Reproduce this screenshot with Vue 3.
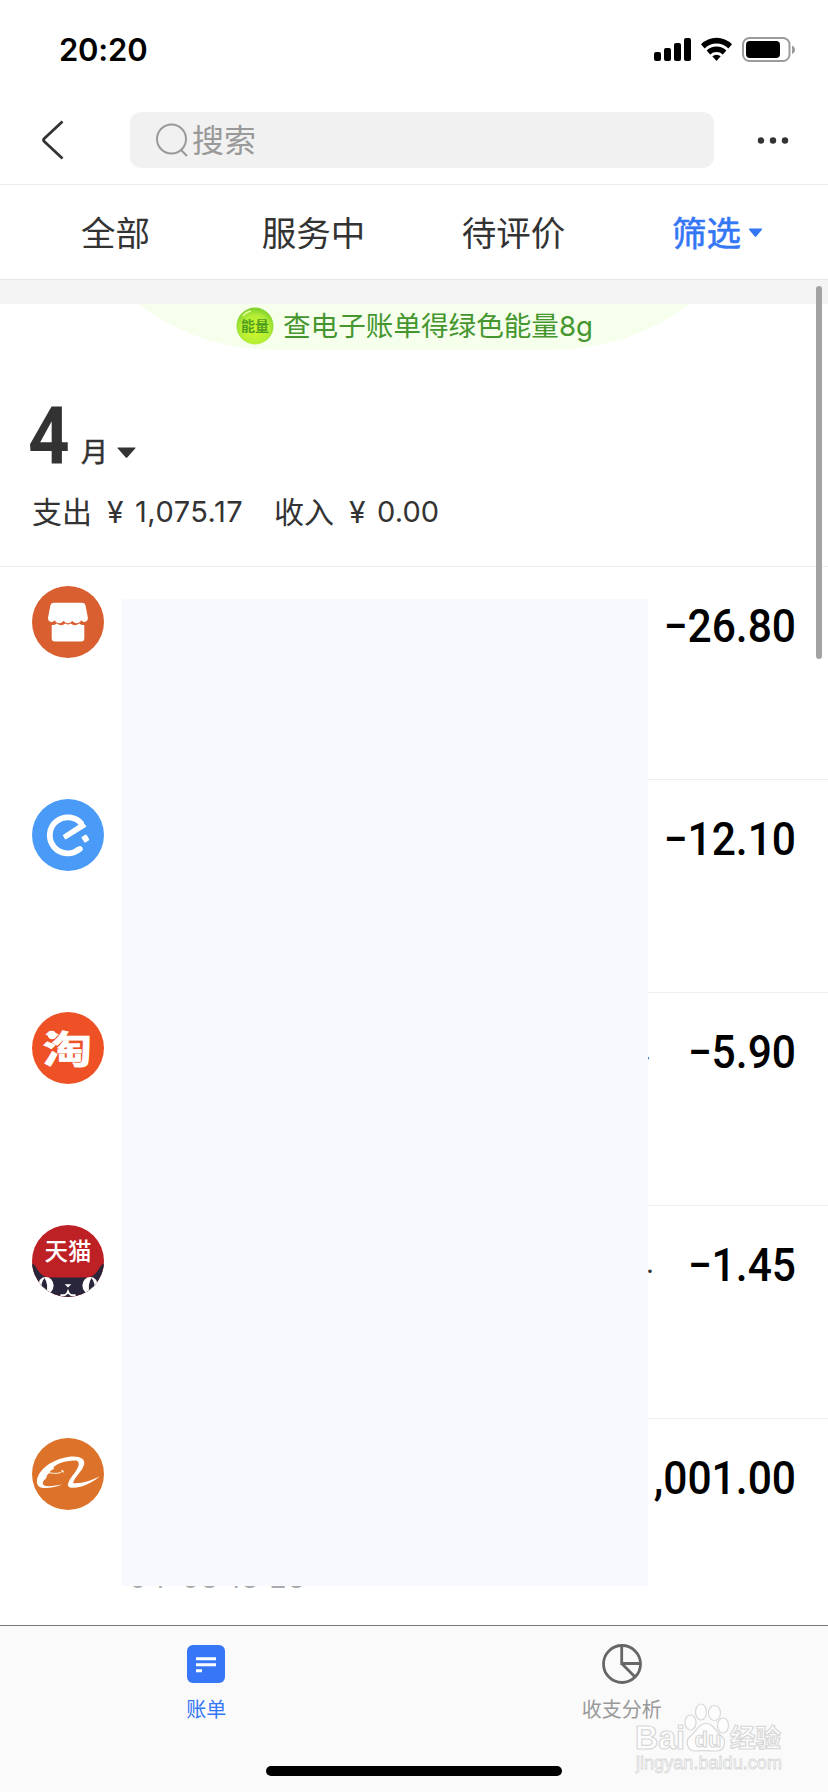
<script setup>
const tabs = ['全部', '服务中', '待评价']
const bills = [
  { icon: 'store', amount: '−26.80' },
  { icon: 'eleme', amount: '−12.10' },
  { icon: 'taobao', amount: '−5.90', rest: '.' },
  { icon: 'tmall', amount: '−1.45', rest: '.' },
  { icon: 'alibaba', amount: ',001.00' },
]
</script>

<template>
  <div class="screen">
    <header class="status">
      <span class="time">20:20</span>
      <svg class="indicators" width="144" height="28" viewBox="0 0 144 28">
        <rect x="1" y="17" width="7" height="9" rx="2" />
        <rect x="11" y="13" width="7" height="13" rx="2" />
        <rect x="21" y="8" width="7" height="18" rx="2" />
        <rect x="31" y="3" width="7" height="23" rx="2" />
        <path d="M48 9.2a22 22 0 0 1 31 0l-3.6 4.2a17 17 0 0 0-23.8 0z" />
        <path d="M53.6 15.4a14.4 14.4 0 0 1 19.8 0l-3.6 4.1a9.2 9.2 0 0 0-12.6 0z" />
        <path d="M59.3 21.3a6.3 6.3 0 0 1 8.4 0l-4.2 4.7z" />
        <rect x="90" y="3" width="46.500" height="23" rx="6.500" fill="none" stroke="#9b9b9b" stroke-width="2" />
        <rect x="93" y="6" width="34" height="17" rx="4" />
        <path d="M139 10.500q3 1.200 3 4.200t-3 4.200z" fill="#9b9b9b" />
      </svg>
    </header>

    <nav class="bar">
      <svg class="back" width="26" height="42" viewBox="0 0 26 42">
        <path d="M22.500 2.500 4.300 19.500q-1.500 1.500 0 3L22.500 39.500" fill="none" stroke="#333" stroke-width="2.800" />
      </svg>
      <div class="search">
        <svg width="36" height="36" viewBox="0 0 36 36" fill="none" stroke="#999" stroke-width="2">
          <circle cx="17.500" cy="17" r="14.500" />
          <path d="m27 28 6 6" />
        </svg>
        <span>搜索</span>
      </div>
      <svg class="more" width="32" height="8" viewBox="0 0 32 8" fill="#333">
        <circle cx="4" cy="4.500" r="3.200" /><circle cx="16" cy="4.500" r="3.200" /><circle cx="28" cy="4.500" r="3.200" />
      </svg>
    </nav>

    <div class="tabs">
      <span v-for="t in tabs" :key="t" class="tab">{{ t }}</span>
      <span class="filter">筛选<svg width="15" height="10" viewBox="0 0 15 10"><path d="M1.500.5h12q1.200.2.4 1.300L8.200 8.600q-.7.800-1.400 0L1.100 1.800Q.4.700 1.500.5z" fill="#3477f6" /></svg></span>
    </div>

    <div class="gap"></div>

    <section class="energy">
      <div class="pill">
        <svg width="38" height="38" viewBox="0 0 38 38">
          <defs>
            <radialGradient id="ball" cx=".5" cy=".6" r=".55">
              <stop offset="0" stop-color="#d0f72c" /><stop offset=".7" stop-color="#b5ee36" /><stop offset="1" stop-color="#86d52e" />
            </radialGradient>
          </defs>
          <circle cx="19" cy="19" r="18.500" fill="url(#ball)" />
          <path d="M7 9Q10 5 15 4" fill="none" stroke="#e4fb9a" stroke-width="1.500" />
          <text x="19" y="24" text-anchor="middle" class="ball-text">能量</text>
        </svg>
        <span>查电子账单得绿色能量8g</span>
      </div>
    </section>

    <section class="summary">
      <div class="month">
        <b>4</b><span>月</span>
        <svg width="19" height="12" viewBox="0 0 19 12"><path d="M1 .5h17q1 .2.200 1.100l-8 9q-.7.700-1.400 0l-8-9Q0 .7 1 .5z" fill="#333" /></svg>
      </div>
      <div class="totals">
        <span class="label">支出</span><span class="yen">¥</span><span class="sum out">1,075.17</span>
        <span class="label">收入</span><span class="yen">¥</span><span class="sum">0.00</span>
      </div>
    </section>

    <main class="list">
      <article v-for="(b, i) in bills" :key="i" class="bill">
        <svg class="avatar" width="72" height="72" viewBox="0 0 72 72">
          <template v-if="b.icon === 'store'">
            <circle cx="36" cy="36" r="36" fill="#d95f30" />
            <path d="M21.500 16.700h29q2.500 0 3 2.500l2.300 12.300c.7 4-4 6.200-6.500 2.700-2 3.800-7 3.800-9 .6-2 3.200-6.700 3.200-8.700 0-2 3.200-7 3.200-9-.6-2.500 3.500-7.200 1.300-6.500-2.700l2.300-12.300q.6-2.500 3.100-2.500z" fill="#fff" />
            <path d="M19.700 39q3 .3 5-1.500 4.800 3.500 8.500 0 2.800 2.200 5.600 0 3.800 3.500 8.500 0 2 1.800 5 1.500v13.500q0 3-3 3H22.700q-3 0-3-3z" fill="#fff" />
          </template>
          <template v-else-if="b.icon === 'eleme'">
            <circle cx="36" cy="36" r="36" fill="#4a9bf8" />
            <path d="M47.500 50A18 18 0 1 1 50 25.300" fill="none" stroke="#fff" stroke-width="5.800" />
            <path d="M45 51.500 48 49.800" stroke="#fff" stroke-width="5.500" stroke-linecap="round" />
            <path d="m49 21.500 5 5.900-20.500 12.700-2.300-3.800L47 26z" fill="#fff" stroke="#fff" stroke-width="1" stroke-linejoin="round" />
            <rect x="50.500" y="36.300" width="5.800" height="6.600" rx="1" transform="rotate(-32 53.400 39.600)" fill="#fff" />
          </template>
          <template v-else-if="b.icon === 'taobao'">
            <circle cx="36" cy="36" r="36" fill="#ef5126" />
            <text transform="translate(10.500 51) scale(1.460 1.120)" class="tao-text">淘</text>
            <circle cx="20" cy="23" r="4.300" fill="#fff" />
          </template>
          <template v-else-if="b.icon === 'tmall'">
            <clipPath id="cat"><circle cx="36" cy="36" r="36" /></clipPath>
            <g clip-path="url(#cat)">
              <rect width="72" height="72" fill="#bd2025" />
              <path d="M0 38.500q2 .3 4.500 4.500 5 9.500 13 9.500h37q8 0 13-9.500 2.500-4.200 4.500-4.500V72H0z" fill="#29253a" />
              <ellipse cx="13.800" cy="60.500" rx="7.800" ry="8.500" fill="#fff" />
              <ellipse cx="58.200" cy="60.500" rx="7.800" ry="8.500" fill="#fff" />
              <path d="M12.500 53q4 6 2 15h-4q-3-9 2-15zM59.500 53q-4 6-2 15h4q3-9-2-15z" fill="#29253a" />
              <path d="M32.700 59.200h6.600l-3.300 3.300z" fill="#fff" />
              <path d="M28.500 70q5.500 1.500 7.500-3.500 2 5 7.500 3.500" fill="none" stroke="#fff" stroke-width="2" />
            </g>
            <text x="36" y="34.500" text-anchor="middle" class="cat-text">天猫</text>
          </template>
          <template v-else>
            <circle cx="36" cy="36" r="36" fill="#dd732b" />
            <path d="M30 46.500C22 50 9 52 6 47.500 1 38 15 22 36 19c10-1.500 18 1 16 8-2 6.500-9 11.500-11 18 8 1 18-2.500 26.500-6.500C60 45 48 51 38 49.500c-5-2 1-10 4.500-14.500C46 30 49 25 44.500 22.500 34 22 24 26 21.500 29.500l.5 1.500c-3 1-4.500 2.500-4.700 4.500-3.500 1.500-2 3-3.300 5C10.500 43 9 47 14 48c5 .5 11-.5 16-1.500z" fill="#fff" />
            <path d="M17 34.500q9 2.500 14.200-1.500m-1.800-.7 1.700.5.200 1.800" fill="none" stroke="#fff0dc" stroke-width="1" />
          </template>
        </svg>
        <div class="info">
          <span class="rest" :class="'rest-' + b.icon">{{ b.rest }}</span>
          <span class="amount">{{ b.amount }}</span>
        </div>
      </article>
      <span class="date">04-08 18<i>:</i>28</span>
      <div class="cover"></div>
    </main>

    <footer class="tabbar">
      <div class="item active">
        <svg width="40" height="40" viewBox="0 0 40 40">
          <rect x="1" y="1" width="38" height="38" rx="6" fill="#3777f7" />
          <path d="M10 14.700h20M10 20.700h20M10 26.700h6" stroke="#fff" stroke-width="3" />
        </svg>
        <span>账单</span>
      </div>
      <div class="item">
        <svg width="40" height="40" viewBox="0 0 40 40" fill="none" stroke="#666" stroke-width="2.800">
          <circle cx="20" cy="20" r="18.500" />
          <path d="M19.700 2v17.500H38M19.700 19.500 32.800 32.800" />
        </svg>
        <span>收支分析</span>
      </div>
      <div class="home"></div>
      <svg class="watermark" width="160" height="80" viewBox="0 0 160 80" fill="#fdfdfd" stroke="#d8d8d8" stroke-width="1.200">
        <ellipse cx="60.500" cy="21.500" rx="5.500" ry="7.500" />
        <ellipse cx="71" cy="11" rx="5.500" ry="8" />
        <ellipse cx="84.500" cy="12" rx="6" ry="7.500" />
        <ellipse cx="93" cy="24.500" rx="5.500" ry="7.500" />
        <path d="M76 22.500c8 0 9 8 15 12 6 5 4 15-4 15.500-7 0-15-1-22 0-8 0-10-10-5-14.500 6-4 8-13 16-13z" />
        <text x="5" y="48" class="wm-big" textLength="50" lengthAdjust="spacingAndGlyphs">Bai</text>
        <text x="64.500" y="46" class="wm-du">du</text>
        <text x="100" y="46" class="wm-cn">经验</text>
        <text x="6" y="68" class="wm-url" textLength="146" lengthAdjust="spacingAndGlyphs">jingyan.baidu.com</text>
      </svg>
    </footer>
    <div class="scrollbar"></div>
  </div>
</template>

<style>
body { background: #fff; }
</style>

<style scoped>
.screen {
  position: relative;
  width: 828px;
  height: 1792px;
  overflow: hidden;
  display: flex;
  flex-direction: column;
  background: #fff;
  color: #333;
  font-family: Inter, "Noto Sans CJK SC", sans-serif;
}
svg { display: block; flex: none; }
.status {
  height: 96px;
  box-sizing: border-box;
  padding: 35px 31px 0 59px;
  display: flex;
  justify-content: space-between;
  color: #000;
}
.time { font-size: 31px; font-weight: 600; line-height: 30px; letter-spacing: -.2px; }
.bar {
  height: 89px;
  box-sizing: border-box;
  border-bottom: 1px solid #ebebeb;
  padding: 0 39px 0 40px;
  display: flex;
  align-items: center;
}
.search {
  width: 584px;
  height: 56px;
  margin: 0 43px 0 64px;
  box-sizing: border-box;
  padding-left: 24px;
  border-radius: 11px;
  background: #f1f1f1;
  color: #999;
  display: flex;
  align-items: center;
  font-size: 32px;
  line-height: 56px;
}
.search span { margin: 2px 0 0 2px; }
.tabs {
  height: 95px;
  box-sizing: border-box;
  border-bottom: 1px solid #e6e6e6;
  display: flex;
  align-items: center;
  font-size: 34.500px;
  padding: 3px 65px 0 81px;
  line-height: 50px;
  justify-content: space-between;
}
.tab:nth-child(1) { margin-right: 15px; }
.tab:nth-child(3) { margin-right: 10px; }
.filter {
  display: flex;
  align-items: center;
  gap: 7px;
  color: #3477f6;
  -webkit-text-stroke: .6px #3477f6;
}
.filter svg { margin-bottom: 1px; }
.gap { height: 24px; background: #f4f4f4; }
.energy { height: 46px; overflow: hidden; display: flex; justify-content: center; }
.pill {
  width: 552px;
  height: 46px;
  box-sizing: border-box;
  padding: 3px 0 0 98px;
  display: flex;
  align-items: flex-start;
  gap: 9px;
  background: #f5ffeb;
  clip-path: path("M0 0H552Q490 46 410 46H140Q62 46 0 0Z");
  color: #45962f;
  font-size: 27.600px;
  line-height: 38px;
  white-space: nowrap;
}
.ball-text { font: 700 14px "Noto Sans CJK SC", sans-serif; fill: #4f9f1e; }
.summary { height: 217px; box-sizing: border-box; border-bottom: 1px solid #ebebeb; padding: 48px 0 0 28px; }
.month { display: flex; align-items: flex-end; height: 72px; }
.month b { font: 700 79px/80px Roboto, sans-serif; width: 44px; transform: scaleX(.92); transform-origin: 0 0; height: 74px; }
.month span { font-size: 27px; line-height: 40px; -webkit-text-stroke: .5px #333; margin-left: 9px; height: 37px; }
.month svg { margin: 0 0 11px 9px; }
.totals { display: flex; align-items: center; margin-top: 22px; height: 40px; font-size: 30px; line-height: 40px; padding-left: 4px; }
.label { width: 74px; }
.yen { width: 29px; font-size: 30px; text-indent: 1px; }
.sum { font-size: 29px; letter-spacing: .1px; }
.out { width: 139px; letter-spacing: .5px; }
.list { position: relative; height: 1058px; overflow: hidden; }
.bill {
  height: 213px;
  display: flex;
  align-items: flex-start;
  padding-left: 32px;
}
.avatar { margin-top: 19px; }
.info {
  flex: 1;
  height: 213px;
  box-sizing: border-box;
  margin-left: 18px;
  padding: 19px 32px 0 0;
  border-bottom: 1px solid #efefef;
  display: flex;
  align-items: flex-start;
}
.bill:nth-child(5) .info { border-bottom: none; }
.rest { margin: 13px 0 0 auto; width: 150px; font-family: Roboto, sans-serif; font-size: 31px; line-height: 50px; }
.rest-taobao { width: 153px; }
.amount {
  width: 0;
  display: flex;
  justify-content: flex-end;
  white-space: nowrap;
  margin-top: 14px;
  font: 500 46px/52px Roboto, sans-serif;
  color: #000;
  transform: scaleX(.925);
  transform-origin: 100% 0;
}
.cover { position: absolute; left: 122px; top: 31.500px; width: 525.500px; height: 987.500px; background: #f7f9fe; }
.date { position: absolute; left: 129px; top: 994px; font-size: 28px; line-height: 34px; letter-spacing: 1.350px; color: #aaa; white-space: nowrap; }
.date i { font-style: normal; visibility: hidden; }
.tao-text { font: 700 34px "Noto Sans CJK SC", sans-serif; fill: #fff; stroke: #fff; stroke-width: .6px; }
.cat-text { font: 500 23.500px "Noto Sans CJK SC", sans-serif; fill: #fff; }
.tabbar {
  position: relative;
  height: 167px;
  box-sizing: border-box;
  border-top: 1.500px solid #777;
  background: #fafafa;
  display: flex;
}
.item {
  flex: 1;
  display: flex;
  flex-direction: column;
  align-items: center;
  padding-top: 18px;
  color: #999;
  font-size: 20px;
  line-height: 30px;
}
.item span { margin-top: 11px; }
.active { color: #3477f6; padding-right: 3px; }
.home { position: absolute; left: 266px; top: 140px; width: 296px; height: 10px; border-radius: 5px; background: #000; }
.watermark { position: absolute; left: 630px; top: 75px; }
.wm-big { font: 700 33px "Liberation Sans", sans-serif; }
.wm-du { font: 700 22px "Liberation Sans", sans-serif; }
.wm-cn { font: 700 25.500px "Noto Sans CJK SC", sans-serif; }
.wm-url { font: 400 18px "Liberation Sans", sans-serif; stroke-width: .8px; }
.scrollbar { position: absolute; left: 816px; top: 286px; width: 6px; height: 373px; border-radius: 3px; background: #a3a3a3; }
</style>
